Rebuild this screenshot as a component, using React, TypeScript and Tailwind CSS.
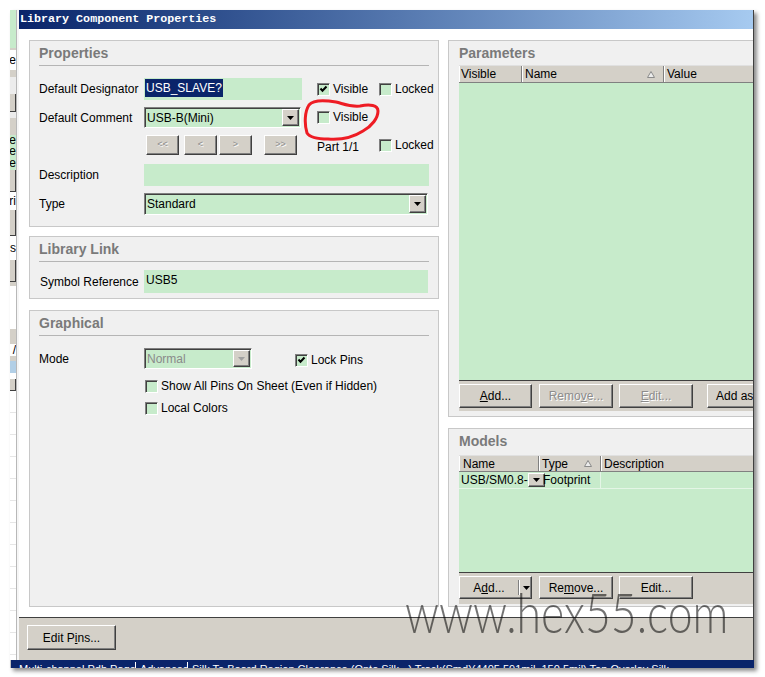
import type { ReactNode } from 'react';

const raised =
  'border border-t-white border-l-white border-b-[#404040] border-r-[#404040] shadow-[inset_-1px_-1px_0_#808080] bg-[#d4d0c8]';
const sunken =
  'border border-t-[#808080] border-l-[#808080] border-b-white border-r-white shadow-[inset_1px_1px_0_#404040]';

function Btn({ children, className = '', disabled = false }: { children: ReactNode; className?: string; disabled?: boolean }) {
  return (
    <div
      className={`${raised} flex items-center justify-center shrink-0 ${
        disabled ? 'text-[#8c8c8c] [text-shadow:1px_1px_0_#fff]' : 'text-black'
      } ${className}`}
    >
      {children}
    </div>
  );
}

function Arrow({ disabled = false, className = '' }: { disabled?: boolean; className?: string }) {
  return (
    <div className={`${raised} w-[17px] flex items-center justify-center shrink-0 ${className}`}>
      <svg width="7" height="4" viewBox="0 0 7 4">
        <path d="M0 0h7L3.5 4z" fill={disabled ? '#a0a0a0' : '#000'} />
      </svg>
    </div>
  );
}

function Combo({ text, className = '', disabled = false }: { text: string; className?: string; disabled?: boolean }) {
  return (
    <div className={`${sunken} bg-[#c7ebcb] flex items-stretch p-[1px] ${className}`}>
      <div className={`flex-1 pl-[1px] flex items-center ${disabled ? 'text-[#8a8a8a]' : ''}`}>{text}</div>
      <Arrow disabled={disabled} />
    </div>
  );
}

function Check({ checked = false, label, className = '' }: { checked?: boolean; label: string; className?: string }) {
  return (
    <div className={`flex items-center gap-[3px] shrink-0 ${className}`}>
      <div className={`${sunken} w-[13px] h-[13px] bg-[#c7ebcb] flex items-center justify-center shrink-0`}>
        {checked && (
          <svg width="9" height="9" viewBox="0 0 9 9">
            <path d="M1.5 3.5L3.5 5.8L7.5 1.5" stroke="#000" strokeWidth="2" fill="none" />
          </svg>
        )}
      </div>
      <span className="leading-[13px]">{label}</span>
    </div>
  );
}

function Panel({
  title,
  className = '',
  head = 'h-[25px] border-b border-[#b5b5b5]',
  children,
}: {
  title: string;
  className?: string;
  head?: string;
  children?: ReactNode;
}) {
  return (
    <div className={`border border-[#c8c8c8] bg-[#f0f0f0] shrink-0 flex flex-col ${className}`}>
      <div className={`shrink-0 pt-[4px] text-[14px] font-bold text-[#7a7a7a] leading-[16px] ${head}`}>{title}</div>
      {children}
    </div>
  );
}

function SortMark() {
  return (
    <svg width="8" height="7" viewBox="0 0 8 7">
      <path d="M0.5 6.5L4 0.5L7.5 6.5Z" fill="#ececec" stroke="#8a8a8a" strokeWidth="1" />
    </svg>
  );
}

const headCell = 'flex items-center pl-[2px] border-r border-[#808080] shadow-[inset_1px_0_0_#fff] shrink-0';

function LeftStrip() {
  const blocks: [string, string, string?][] = [
    ['h-[38px]', 'bg-[#c7ebcb]'],
    ['h-[2px]', 'bg-[#d4d0c8]'],
    ['h-[20px]', 'bg-white', 'e'],
    ['h-[7px]', 'bg-[#d4d0c8]'],
    ['h-[17px]', 'bg-[#ececec]'],
    ['h-[18px]', 'bg-[#d4d0c8] border-b border-r border-[#404040]'],
    ['h-[6px]', 'bg-[#ececec]'],
    ['h-[17px]', 'bg-[#d4d0c8]'],
    ['h-[11px]', 'bg-[#c7ebcb]', 'e'],
    ['h-[11px]', 'bg-[#c7ebcb]', 'e'],
    ['h-[13px]', 'bg-[#c7ebcb]', 'e'],
    ['h-[22px]', 'bg-[#d4d0c8] border-b border-r border-[#404040]'],
    ['h-[18px]', 'bg-white', 'ri'],
    ['h-[26px]', 'bg-[#d4d0c8] border-b border-r border-[#404040]'],
    ['h-[24px]', 'bg-white', 's'],
    ['h-[22px]', 'bg-[#d4d0c8] border-b border-r border-[#404040]'],
    ['h-[4px]', 'bg-[#d4d0c8]'],
    ['h-[43px]', 'bg-white'],
    ['h-[15px]', 'bg-[#d4d0c8]'],
    ['h-[12px]', 'bg-white', '/'],
    ['h-[5px]', 'bg-[#d4d0c8]'],
    ['h-[12px]', 'bg-[#b2cfe6]'],
    ['h-[6px]', 'bg-white'],
    ['h-[12px]', 'bg-[#d4d0c8] border-b border-r border-[#404040]'],
  ];
  return (
    <div className="w-[7px] h-[650px] flex flex-col overflow-hidden border-r border-[#b8b8b8] bg-white shrink-0">
      {blocks.map(([h, c, t], i) => (
        <div key={i} className={`${h} ${c} shrink-0 flex items-center justify-end overflow-hidden leading-[11px]`}>
          {t && <span className="whitespace-nowrap">{t}</span>}
        </div>
      ))}
      <div className="flex-1 bg-[repeating-linear-gradient(to_bottom,#ffffff_0px,#ffffff_21px,#e6e6e6_21px,#e6e6e6_22px)]" />
    </div>
  );
}

function Properties() {
  return (
    <Panel title="Properties" className="h-[187px] px-[9px]">
      <div className="flex items-center h-[22px] mt-[12px]">
        <div className="w-[105px] shrink-0">Default Designator</div>
        <div className="w-[158px] h-full bg-[#c7ebcb] pl-[1px] pt-[1px] shrink-0">
          <span className="inline-block h-[18px] leading-[18px] bg-[#0a246a] text-white pr-[1px] pl-[1px]">USB_SLAVE?</span>
        </div>
        <Check checked label="Visible" className="ml-[15px] w-[62px]" />
        <Check label="Locked" />
      </div>
      <div className="flex items-center h-[21px] mt-[7px]">
        <div className="w-[105px] shrink-0">Default Comment</div>
        <Combo text="USB-B(Mini)" className="w-[157px] h-full shrink-0" />
        <Check label="Visible" className="ml-[16px]" />
      </div>
      <div className="flex items-center h-[20px] mt-[7px]">
        <div className="w-[107px] shrink-0" />
        <Btn disabled className="w-[33px] h-full text-[9px]">&lt;&lt;</Btn>
        <Btn disabled className="w-[33px] h-full text-[9px] ml-[5px]">&lt;</Btn>
        <Btn disabled className="w-[33px] h-full text-[9px] ml-[2px]">&gt;</Btn>
        <Btn disabled className="w-[33px] h-full text-[9px] ml-[12px]">&gt;&gt;</Btn>
        <div className="ml-[20px] w-[62px] shrink-0 pt-[3px]">Part 1/1</div>
        <Check label="Locked" />
      </div>
      <div className="flex items-center h-[22px] mt-[9px]">
        <div className="w-[105px] shrink-0">Description</div>
        <div className="w-[285px] h-full bg-[#c7ebcb]" />
      </div>
      <div className="flex items-center h-[22px] mt-[7px]">
        <div className="w-[105px] shrink-0">Type</div>
        <Combo text="Standard" className="w-[284px] h-full" />
      </div>
    </Panel>
  );
}

function LibraryLink() {
  return (
    <Panel title="Library Link" className="h-[63px] mt-[9px] px-[9px]">
      <div className="flex items-center h-[23px] mt-[8px]">
        <div className="w-[105px] shrink-0 pl-[1px]">Symbol Reference</div>
        <div className="w-[284px] h-full bg-[#c7ebcb] pl-[2px] pt-[1px]">USB5</div>
      </div>
    </Panel>
  );
}

function Graphical() {
  return (
    <Panel title="Graphical" className="h-[297px] mt-[11px] px-[9px]">
      <div className="flex items-center h-[21px] mt-[12px]">
        <div className="w-[105px] shrink-0">Mode</div>
        <Combo text="Normal" disabled className="w-[108px] h-full shrink-0" />
        <Check checked label="Lock Pins" className="ml-[43px] mt-[3px]" />
      </div>
      <Check label="Show All Pins On Sheet (Even if Hidden)" className="ml-[106px] mt-[11px]" />
      <Check label="Local Colors" className="ml-[106px] mt-[9px]" />
    </Panel>
  );
}

function Parameters() {
  return (
    <Panel title="Parameters" head="h-[24px]" className="h-[377px] px-[10px] w-[330px]">
      <div className="flex h-[18px] bg-[#d4d0c8] border-t border-[#e0e0e0] border-b border-b-[#808080] shrink-0">
        <div className={`${headCell} w-[63px]`}>Visible</div>
        <div className={`${headCell} w-[142px] justify-between pr-[8px]`}>
          <span className="pl-[1px]">Name</span>
          <SortMark />
        </div>
        <div className="flex items-center pl-[3px] flex-1 shadow-[inset_1px_0_0_#fff]">Value</div>
      </div>
      <div className="h-[297px] bg-[#c7ebcb] shrink-0" />
      <div className="h-[31px] bg-[#d4d0c8] border-t border-[#404040] pt-[3px] flex shrink-0">
        <Btn className="w-[73px] h-[24px]">
          <span>
            <u>A</u>dd...
          </span>
        </Btn>
        <Btn disabled className="w-[74px] h-[24px] ml-[7px]">
          <span>
            Remo<u>v</u>e...
          </span>
        </Btn>
        <Btn disabled className="w-[74px] h-[24px] ml-[6px]">
          <span>
            <u>E</u>dit...
          </span>
        </Btn>
        <Btn className="w-[90px] h-[24px] ml-[14px] justify-start pl-[8px] whitespace-nowrap overflow-hidden">
          Add as Rule...
        </Btn>
      </div>
    </Panel>
  );
}

function Models() {
  return (
    <Panel title="Models" head="h-[26px]" className="h-[179px] mt-[11px] px-[10px] w-[330px]">
      <div className="flex h-[17px] bg-[#d4d0c8] border-t border-[#e0e0e0] border-b border-b-[#808080] shrink-0">
        <div className={`${headCell} w-[80px]`}>
          <span className="pl-[2px]">Name</span>
        </div>
        <div className={`${headCell} w-[62px] justify-between pr-[8px]`}>
          <span className="pl-[1px]">Type</span>
          <SortMark />
        </div>
        <div className="flex items-center pl-[3px] flex-1 shadow-[inset_1px_0_0_#fff]">Description</div>
      </div>
      <div className="h-[100px] bg-[#c7ebcb] shrink-0 flex flex-col">
        <div className="h-[17px] flex border-b border-[#e4f5e6]">
          <div className="w-[80px] flex items-stretch shrink-0 py-[1px] pr-[1px]">
            <div className="flex-1 pl-[2px] flex items-center">USB/SM0.8-</div>
            <Arrow className="w-[16px]" />
          </div>
          <div className="w-[62px] flex items-center pl-[4px] border-r border-[#e4f5e6] shrink-0">Footprint</div>
          <div className="flex-1" />
        </div>
      </div>
      <div className="h-[32px] bg-[#d4d0c8] border-t border-[#404040] pt-[3px] flex shrink-0">
        <Btn className="w-[73px] h-[23px] justify-start">
          <span className="w-[58px] text-center">
            A<u>d</u>d...
          </span>
          <span className="w-px h-[15px] bg-[#808080] shadow-[1px_0_0_#fff]" />
          <svg width="7" height="4" viewBox="0 0 7 4" className="ml-[4px]">
            <path d="M0 0h7L3.5 4z" fill="#000" />
          </svg>
        </Btn>
        <Btn className="w-[74px] h-[23px] ml-[7px]">
          <span>
            Re<u>m</u>ove...
          </span>
        </Btn>
        <Btn className="w-[74px] h-[23px] ml-[6px]">Edit...</Btn>
      </div>
    </Panel>
  );
}

function Dialog() {
  return (
    <div className="w-[737px] h-[650px] flex flex-col border-l-2 border-l-[#f6f6f6] border-r border-r-[#404040] bg-white shrink-0">
      <div className="h-[19px] shrink-0 bg-gradient-to-r from-[#0a246a] to-[#a6caf0] flex items-center pl-[1px]">
        <span className="font-['Liberation_Mono',monospace] font-bold text-[11.7px] text-white leading-[19px]">
          Library Component Properties
        </span>
      </div>
      <div className="h-[588px] shrink-0 flex gap-[9px] px-[10px] pt-[11px] overflow-hidden">
        <div className="w-[410px] shrink-0 flex flex-col">
          <Properties />
          <LibraryLink />
          <Graphical />
        </div>
        <div className="w-[330px] shrink-0 flex flex-col">
          <Parameters />
          <Models />
        </div>
      </div>
      <div className="flex-1 bg-[#d4d0c8] border-t border-[#404040] pl-[8px] pt-[7px]">
        <Btn className="w-[89px] h-[25px]">
          <span>
            Edit P<u>i</u>ns...
          </span>
        </Btn>
      </div>
    </div>
  );
}

export default function App() {
  return (
    <div className="relative w-[765px] h-[677px] bg-white overflow-hidden font-['Liberation_Sans',Arial,sans-serif] text-[12px] text-black">
      <div className="ml-[10px] mt-[10px] w-[744px] flex flex-col shadow-[3px_3px_4px_rgba(0,0,0,0.45)]">
        <div className="flex">
          <LeftStrip />
          <Dialog />
        </div>
        <div className="h-[8px] bg-[#0a246a] overflow-hidden flex text-white text-[11px] leading-[14px] pt-[2px] border-l border-[#c0c0c0]">
          <div className="w-[125px] pl-[8px] border-r border-white whitespace-nowrap overflow-hidden shrink-0">Multi-channel Pdb Page</div>
          <div className="w-[52px] pl-[4px] border-r border-white whitespace-nowrap overflow-hidden shrink-0">Advanced</div>
          <div className="pl-[4px] whitespace-nowrap overflow-hidden">
            Silk To Board Region Clearance (Onto Silk...) Track(Smd)(4405.591mil, 150.5mil) Top Overlay Silk
          </div>
        </div>
      </div>

      <svg className="absolute left-[300px] top-[98px]" width="85" height="48" viewBox="0 0 85 48">
        <path
          d="M60 8C50 9 44 6 36 4C24 2 13 2 9 7C5 13 4 25 7 35C10 40 20 41 28 41C40 42 52 40 63 33C72 28 78 20 78 13C78 7 70 6 60 8Z"
          fill="none"
          stroke="#ee1c24"
          strokeWidth="3"
        />
      </svg>

      <div className="absolute left-[405px] top-[585px] text-[55px] leading-[55px] font-['Lato',sans-serif] font-light text-black/55 whitespace-nowrap scale-x-[0.81] origin-left">
        www.hex55.com
      </div>
    </div>
  );
}
